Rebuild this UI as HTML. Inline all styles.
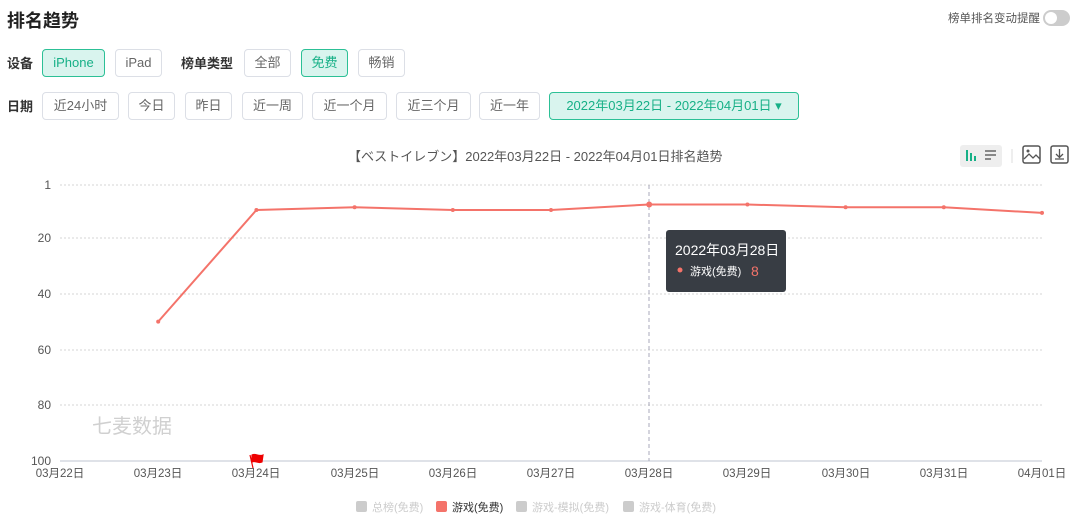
<!DOCTYPE html>
<html><head><meta charset="utf-8"><style>
*{margin:0;padding:0;box-sizing:border-box}
body{width:1080px;height:525px;background:#fff;font-family:"Liberation Sans","Noto Sans CJK SC",sans-serif;position:relative;overflow:hidden;color:#333}
.a{position:absolute;white-space:nowrap}
.btn{position:absolute;height:28px;border:1px solid #dcdfe6;border-radius:4px;font-size:13px;color:#666;line-height:26px;text-align:center}
.on{background:#d9f4ee;border-color:#2cc096;color:#17b087}
.lbl{position:absolute;font-size:13px;font-weight:bold;color:#333}
</style></head><body>
<div class="a" style="left:7px;top:7px;font-size:18px;font-weight:bold;color:#222">排名趋势</div>
<div class="a" style="right:40px;top:10px;font-size:11.5px;color:#555">榜单排名变动提醒</div>
<div class="a" style="left:1043px;top:10px;width:27px;height:16px;border-radius:8px;background:#ccc"><div style="position:absolute;left:2px;top:2px;width:12px;height:12px;border-radius:6px;background:#fff"></div></div>

<div class="lbl" style="left:7px;top:53px">设备</div>
<div class="btn on" style="left:42px;top:49px;width:63px">iPhone</div>
<div class="btn" style="left:115px;top:49px;width:47px">iPad</div>
<div class="lbl" style="left:181px;top:53px">榜单类型</div>
<div class="btn" style="left:244px;top:49px;width:47px">全部</div>
<div class="btn on" style="left:301px;top:49px;width:47px">免费</div>
<div class="btn" style="left:358px;top:49px;width:47px">畅销</div>

<div class="lbl" style="left:7px;top:96px">日期</div>
<div class="btn" style="left:42px;top:92px;width:77px">近24小时</div>
<div class="btn" style="left:128px;top:92px;width:47px">今日</div>
<div class="btn" style="left:185px;top:92px;width:47px">昨日</div>
<div class="btn" style="left:242px;top:92px;width:61px">近一周</div>
<div class="btn" style="left:312px;top:92px;width:75px">近一个月</div>
<div class="btn" style="left:396px;top:92px;width:75px">近三个月</div>
<div class="btn" style="left:479px;top:92px;width:61px">近一年</div>
<div class="btn on" style="left:549px;top:92px;width:250px">2022年03月22日 - 2022年04月01日 ▾</div>

<div class="a" style="left:348px;top:146px;font-size:13px;color:#555">【ベストイレブン】2022年03月22日 - 2022年04月01日排名趋势</div>

<div class="a" style="left:960px;top:145px;width:42px;height:22px;background:#eee;border-radius:3px"></div>
<svg class="a" style="left:960px;top:144px" width="120" height="26">
<g stroke="#17b087" stroke-width="2"><line x1="7" y1="6" x2="7" y2="17"/><line x1="11" y1="9" x2="11" y2="17"/><line x1="15" y1="12" x2="15" y2="17"/></g>
<g stroke="#666" stroke-width="1.5"><line x1="25" y1="7" x2="36" y2="7"/><line x1="25" y1="11" x2="36" y2="11"/><line x1="25" y1="15" x2="31" y2="15"/></g>
<line x1="52" y1="5" x2="52" y2="19" stroke="#ddd"/>
<rect x="63" y="2" width="17" height="17" rx="2" fill="none" stroke="#555" stroke-width="1.5"/>
<path d="M64 15l5-5 4 4 3-3 4 4" fill="none" stroke="#555" stroke-width="1.3"/><circle cx="68" cy="7" r="1.5" fill="#555"/>
<rect x="91" y="2" width="17" height="17" rx="2" fill="none" stroke="#555" stroke-width="1.5"/>
<path d="M99.5 5v8M96 10l3.5 3.5 3.5-3.5M95 15h9" fill="none" stroke="#555" stroke-width="1.3"/>
</svg>

<svg class="a" style="left:0;top:0" width="1080" height="525" font-family="Liberation Sans, Noto Sans CJK SC, sans-serif">
<g stroke="#d4d4d4" stroke-dasharray="2,2" stroke-width="1">
<line x1="60" y1="185" x2="1042" y2="185"/><line x1="60" y1="238" x2="1042" y2="238"/><line x1="60" y1="294" x2="1042" y2="294"/><line x1="60" y1="350" x2="1042" y2="350"/><line x1="60" y1="405" x2="1042" y2="405"/>
</g>
<line x1="60" y1="461" x2="1042" y2="461" stroke="#bfc5d2"/>
<line x1="649" y1="185" x2="649" y2="461" stroke="#aab" stroke-dasharray="4,3"/>
<g font-size="12" fill="#555" text-anchor="end">
<text x="51" y="189">1</text><text x="51" y="242">20</text><text x="51" y="298">40</text><text x="51" y="354">60</text><text x="51" y="409">80</text><text x="51" y="465">100</text>
</g>
<g font-size="11.5" fill="#555" text-anchor="middle">
<text x="60" y="477">03月22日</text><text x="158" y="477">03月23日</text><text x="256" y="477">03月24日</text><text x="355" y="477">03月25日</text><text x="453" y="477">03月26日</text><text x="551" y="477">03月27日</text><text x="649" y="477">03月28日</text><text x="747" y="477">03月29日</text><text x="846" y="477">03月30日</text><text x="944" y="477">03月31日</text><text x="1042" y="477">04月01日</text>
</g>
<text x="92" y="433" font-size="20" fill="#d0d0d0">七麦数据</text>
<path d="M250 455l3 13M252 455c4-2 6 2 11 0l-1 7c-4 2-7-2-10 0z" fill="#e00" stroke="#e00" stroke-width="1.2"/>
<polyline fill="none" stroke="#f4736a" stroke-width="2" points="158.2,321.6 256.4,210 354.6,207.3 452.8,210 551,210 649.2,204.5 747.4,204.5 845.6,207.3 943.8,207.3 1042,212.9"/>
<g fill="#f4736a"><circle cx="158.2" cy="321.6" r="2"/><circle cx="256.4" cy="210" r="2"/><circle cx="354.6" cy="207.3" r="2"/><circle cx="452.8" cy="210" r="2"/><circle cx="551" cy="210" r="2"/><circle cx="649.2" cy="204.5" r="3"/><circle cx="747.4" cy="204.5" r="2"/><circle cx="845.6" cy="207.3" r="2"/><circle cx="943.8" cy="207.3" r="2"/><circle cx="1042" cy="212.9" r="2"/></g>
<rect x="666" y="230" width="120" height="62" rx="3" fill="#383d44"/>
<text x="675" y="255" font-size="14" fill="#fff">2022年03月28日</text>
<circle cx="680" cy="270" r="2.5" fill="#f4736a"/>
<text x="690" y="275" font-size="11" fill="#fff">游戏(免费)</text>
<text x="751" y="276" font-size="14" fill="#f4736a">8</text>
<g font-size="11">
<rect x="356" y="501" width="11" height="11" rx="2" fill="#ccc"/><text x="372" y="511" fill="#ccc">总榜(免费)</text>
<rect x="436" y="501" width="11" height="11" rx="2" fill="#f4736a"/><text x="452" y="511" fill="#333">游戏(免费)</text>
<rect x="516" y="501" width="11" height="11" rx="2" fill="#ccc"/><text x="532" y="511" fill="#ccc">游戏-模拟(免费)</text>
<rect x="623" y="501" width="11" height="11" rx="2" fill="#ccc"/><text x="639" y="511" fill="#ccc">游戏-体育(免费)</text>
</g>
</svg>
</body></html>
